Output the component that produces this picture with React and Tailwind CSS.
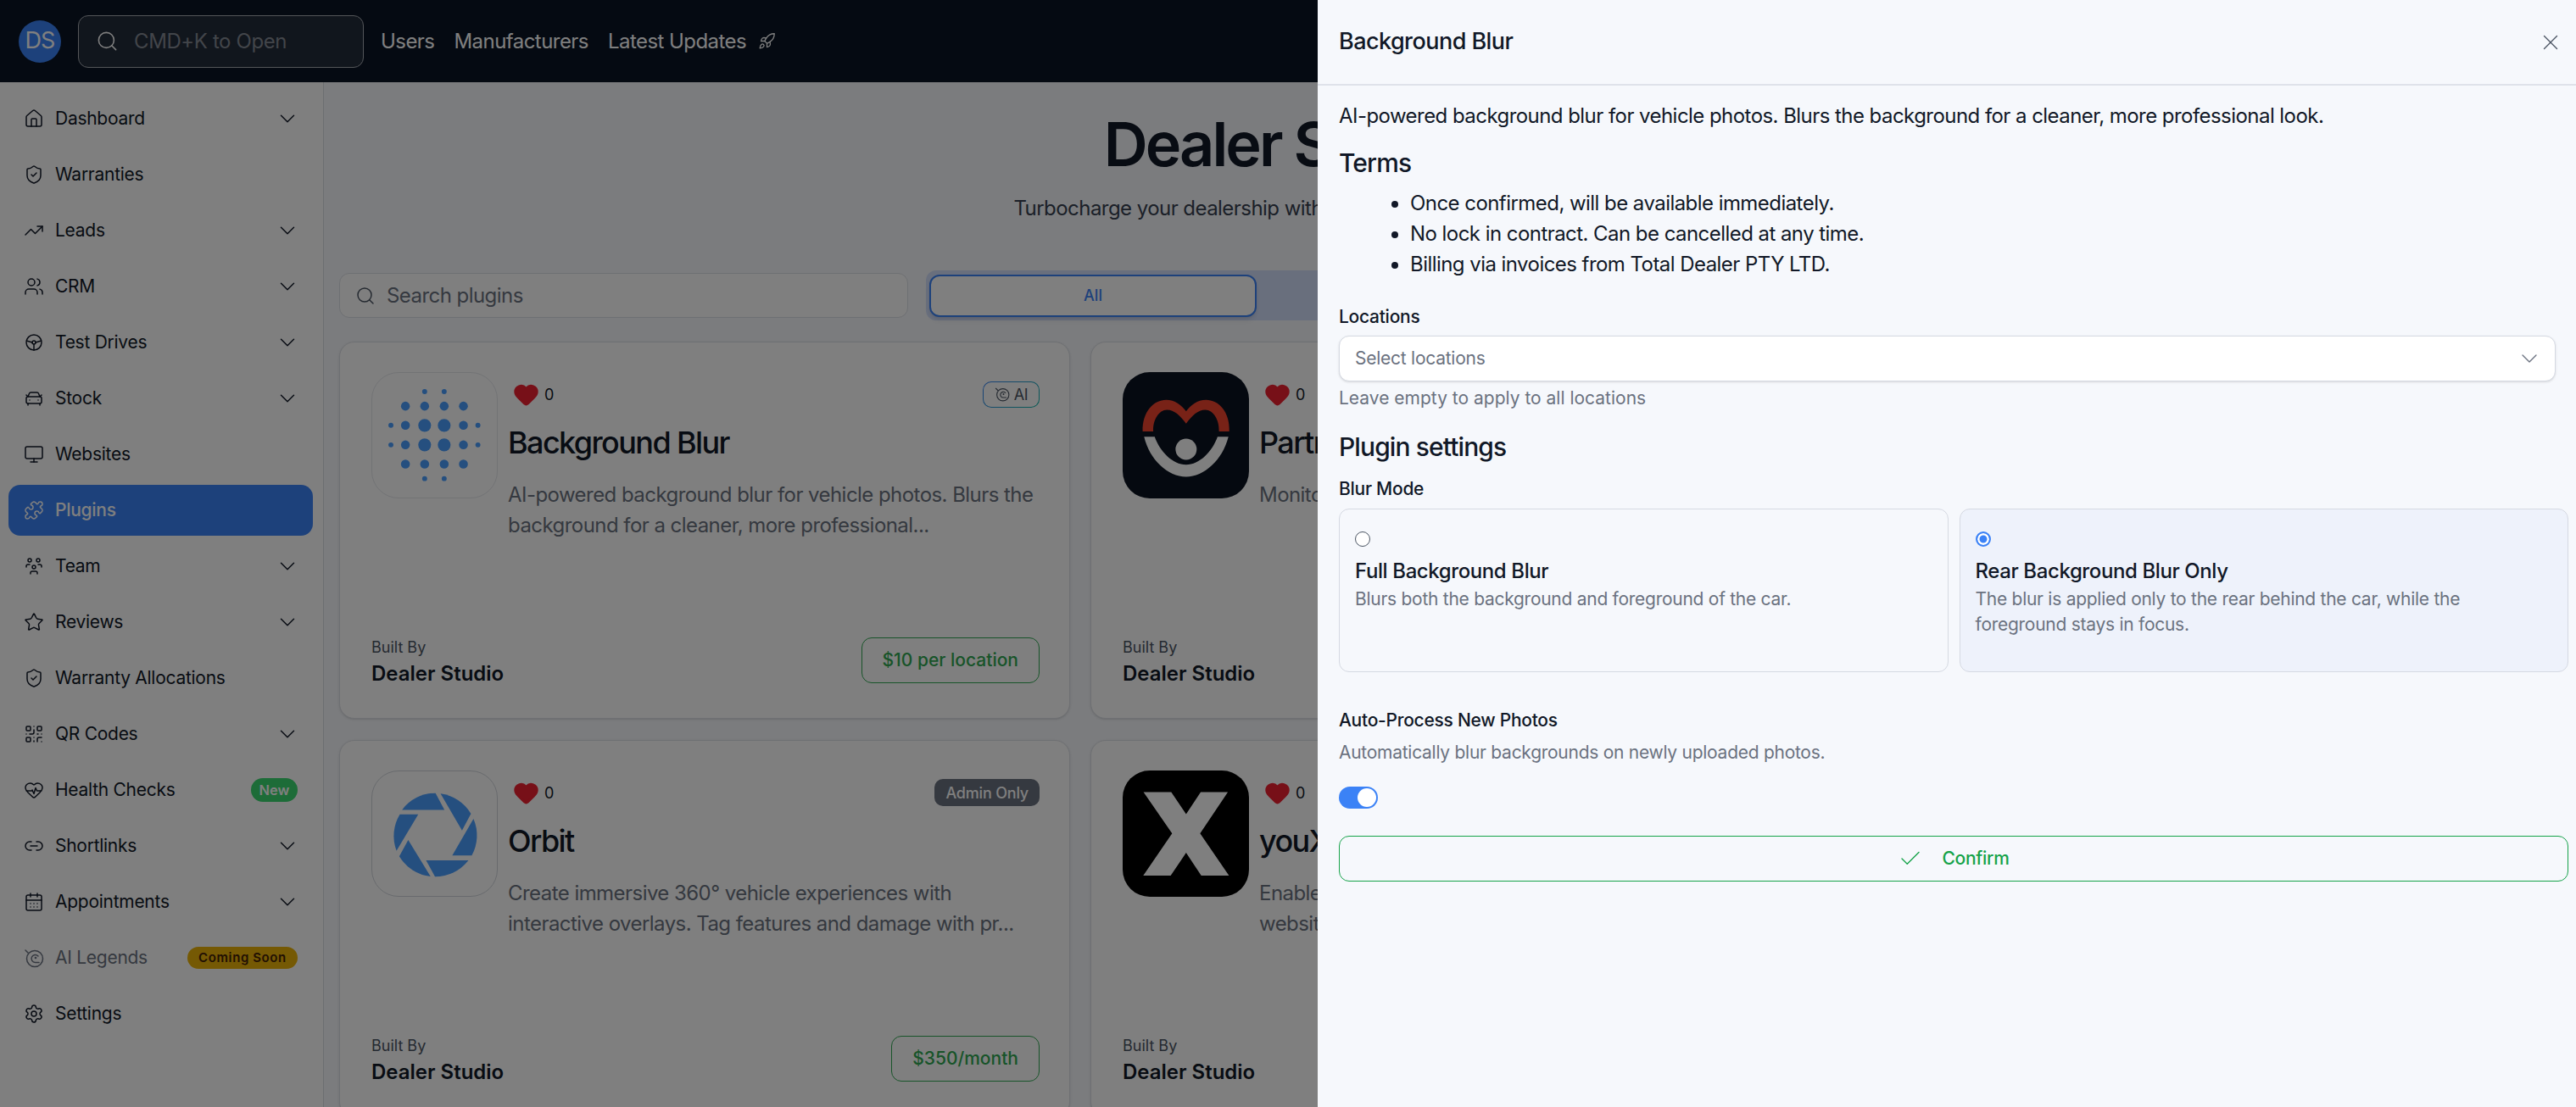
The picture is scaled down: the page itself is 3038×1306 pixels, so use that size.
import React from 'react';
import {
  ChevronDown, Check, X, Search, Rocket, House, ShieldCheck, TrendingUp, CarFront, Monitor, Puzzle, Star,
  QrCode, HeartPulse, Link2, CalendarDays, Settings, Heart,
} from 'lucide-react';
import { TbSteeringWheel, TbUsersGroup } from 'react-icons/tb';
import { LuUsers } from 'react-icons/lu';

const AiIcon = ({ size = 24, className = '' }) => (
  <svg width={size} height={size} viewBox="0 0 24 24" fill="none" stroke="currentColor" strokeWidth="1.5" strokeLinecap="round" strokeLinejoin="round" className={className}>
    <circle cx="13" cy="13" r="9.5" />
    <path d="M2 3l3 3" />
    <path d="M17 10a4.5 4.5 0 1 0-3.5 7.4H18" />
    <circle cx="14" cy="12" r="0.6" fill="currentColor" />
  </svg>
);

const navItems = [
  { label: 'Dashboard', icon: House, caret: true },
  { label: 'Warranties', icon: ShieldCheck },
  { label: 'Leads', icon: TrendingUp, caret: true },
  { label: 'CRM', icon: LuUsers, caret: true },
  { label: 'Test Drives', icon: TbSteeringWheel, caret: true },
  { label: 'Stock', icon: CarFront, caret: true },
  { label: 'Websites', icon: Monitor },
  { label: 'Plugins', icon: Puzzle, active: true },
  { label: 'Team', icon: TbUsersGroup, caret: true },
  { label: 'Reviews', icon: Star, caret: true },
  { label: 'Warranty Allocations', icon: ShieldCheck },
  { label: 'QR Codes', icon: QrCode, caret: true },
  { label: 'Health Checks', icon: HeartPulse, badge: 'new' },
  { label: 'Shortlinks', icon: Link2, caret: true },
  { label: 'Appointments', icon: CalendarDays, caret: true },
  { label: 'AI Legends', icon: AiIcon, badge: 'soon', muted: true },
  { label: 'Settings', icon: Settings },
];

function SidebarItem({ item }) {
  const Icon = item.icon;
  return (
    <div className={`flex h-[60px] items-center rounded-[14px] pr-[18px] pl-[18px] text-[21px] tracking-[-0.27px] ${
      item.active ? 'bg-[#3b82f6] font-medium text-white' : item.muted ? 'text-[#6b7280]' : 'text-[#111827]'
    }`}>
      <Icon size={24} strokeWidth={1.5} className="mr-[13px] shrink-0" />
      <span className="flex-1 whitespace-nowrap">{item.label}</span>
      {item.caret && <ChevronDown size={30} strokeWidth={1.2} className="mr-[-3px]" />}
      {item.badge === 'new' && (
        <span className="flex h-[28px] w-[55px] items-center justify-center rounded-full bg-[#3ad870] text-[16.5px] font-semibold tracking-normal text-white">New</span>
      )}
      {item.badge === 'soon' && (
        <span className="flex h-[26px] w-[130px] items-center justify-center rounded-full bg-[#eab308] text-[15px] font-semibold tracking-[0.6px] text-[#422006]">Coming Soon</span>
      )}
    </div>
  );
}

const BlurLogo = () => {
  const rows = [
    [95, [[211, 9], [281, 9]]],
    [147, [[142, 16], [211, 16], [281, 16], [350, 16]]],
    [216, [[90, 9], [142, 16], [211, 23], [281, 23], [350, 16], [402, 9]]],
    [286, [[90, 9], [142, 16], [211, 23], [281, 23], [350, 16], [402, 9]]],
    [355, [[142, 16], [211, 16], [281, 16], [350, 16]]],
    [407, [[211, 9], [281, 9]]],
  ];
  return (
    <svg viewBox="23 28 447 447" className="size-full">
      {rows.map(([y, dots]) => dots.map(([x, r]) => <circle key={`${x}-${y}`} cx={x} cy={y} r={r} fill="#4a9eff" />))}
    </svg>
  );
};

const PartnerLogo = () => (
  <svg viewBox="45 28 442 442" className="size-full">
    <path d="M115 236C113 165 155 125 197 125C228 125 250 143 267 165C284 143 306 125 337 125C379 125 421 165 418 236H382C384 195 362 160 334 160C308 160 288 180 267 208C246 180 226 160 200 160C172 160 150 195 152 236Z" fill="#f0442f" />
    <path d="M120 254H157C175 305 220 352 267 352C314 352 359 305 377 254H415C395 335 330 394 267 394C204 394 139 335 120 254Z" fill="#fff" />
    <circle cx="267" cy="298" r="37" fill="#fff" />
  </svg>
);

const OrbitLogo = () => (
  <svg viewBox="23 30 447 447" className="size-full" fill="#4a9eff">
    <path d="M130 168A150 150 0 0 1 250 108L282 168Z" />
    <path d="M268 110A150 150 0 0 1 377 182L345 242Z" />
    <path d="M386 200A150 150 0 0 1 380 332L310 332Z" />
    <path d="M368 349A150 150 0 0 1 248 408L216 349Z" />
    <path d="M232 407A150 150 0 0 1 120 335L152 276Z" />
    <path d="M110 315A150 150 0 0 1 122 184L188 184Z" />
  </svg>
);

const XLogo = () => (
  <svg viewBox="45 32 442 442" className="size-full">
    <polygon points="118,108 215,108 267,185 318,108 413,108 316,252 417,400 320,400 267,320 213,400 117,400 218,252" fill="#fff" />
  </svg>
);

const plugins = [
  {
    name: 'Background Blur', logo: BlurLogo, logoBg: 'bg-white border border-[#e5e7eb]', tag: 'ai', price: '$10 per location',
    desc: 'AI-powered background blur for vehicle photos. Blurs the background for a cleaner, more professional...',
  },
  {
    name: 'Partner Health', logo: PartnerLogo, logoBg: 'bg-[#0b1320]', price: '$10 per location',
    desc: 'Monitor partner health across all of your dealership leads.',
  },
  {
    name: 'Orbit', logo: OrbitLogo, logoBg: 'bg-white border border-[#d1d5db]', tag: 'admin', price: '$350/month',
    desc: 'Create immersive 360° vehicle experiences with interactive overlays. Tag features and damage with pr...',
  },
  {
    name: 'youX', logo: XLogo, logoBg: 'bg-black', price: '$10 per location',
    desc: 'Enable finance applications across your dealership website.',
  },
];

function PluginCard({ plugin }) {
  const Logo = plugin.logo;
  return (
    <div className="flex h-[445px] flex-col justify-between rounded-[18px] border border-[#dde0e6] bg-white pt-[35px] pr-[35px] pb-[34px] pl-[37px] shadow-sm">
      <div className="flex gap-[12px]">
        <div className={`size-[149px] shrink-0 overflow-hidden rounded-[32px] ${plugin.logoBg}`}>
          <Logo />
        </div>
        <div className="min-w-0 flex-1">
          <div className="flex h-[52px] items-center justify-between">
            <div className="ml-[6px] flex items-center gap-[6px]">
              <Heart size={31} fill="#ef2030" stroke="#ef2030" />
              <span className="text-[18px] text-[#111827]">0</span>
            </div>
            {plugin.tag === 'ai' && (
              <span className="flex h-[31px] w-[67px] items-center justify-center gap-[5px] rounded-[10px] border border-transparent text-[18px] tracking-[-0.3px] text-[#4b5563] [background:linear-gradient(white,white)_padding-box,linear-gradient(135deg,#3b82f6,#14b8a6)_border-box]">
                <AiIcon size={18} /> AI
              </span>
            )}
            {plugin.tag === 'admin' && (
              <span className="flex h-[32px] items-center rounded-[10px] bg-[#6b7280] px-[13px] text-[18px] font-medium tracking-[-0.2px] text-white">Admin Only</span>
            )}
          </div>
          <h3 className="mt-[7px] text-[36px] leading-[48px] font-medium tracking-[-1.6px] whitespace-nowrap text-[#111827]">{plugin.name}</h3>
          <p className="mt-[20px] text-[24px] leading-[36px] tracking-[-0.55px] text-[#6b7280]">{plugin.desc}</p>
        </div>
      </div>
      <div className="flex items-end justify-between">
        <div>
          <div className="text-[18px] leading-[27px] text-[#4b5563]">Built By</div>
          <div className="text-[24px] leading-[36px] font-semibold text-[#111827]">Dealer Studio</div>
        </div>
        <span className="mb-[7px] flex h-[54px] items-center rounded-[12px] border border-[#30a852] px-[24px] text-[21px] font-medium text-[#30a852]">{plugin.price}</span>
      </div>
    </div>
  );
}

function BlurOption({ title, desc, checked }) {
  return (
    <div className={`h-[193px] rounded-[12px] border border-[#d5d9e2] px-[18px] pt-[26px] ${checked ? 'bg-[#eef2fb]' : ''}`}>
      <span className={`block size-[18px] rounded-full ${checked ? 'border-2 border-[#3b82f6] bg-[#3b82f6] shadow-[inset_0_0_0_2.5px_#fff]' : 'border-[1.5px] border-[#4b5563] bg-white'}`} />
      <div className="mt-[11px] text-[24px] leading-[36px] font-medium tracking-[-0.4px] text-[#111827]">{title}</div>
      <p className="text-[21px] leading-[30px] tracking-[-0.27px] text-[#6b7280]">{desc}</p>
    </div>
  );
}

function PluginDrawer() {
  return (
    <aside className="absolute inset-y-0 right-0 z-20 w-[1484px] bg-[#f6f8fc] text-[#111827]">
      <div className="flex h-[101px] items-center justify-between border-b-2 border-[#dfe2ea] pr-[15px] pl-[25px]">
        <h2 className="text-[27px] font-medium tracking-[-0.55px]">Background Blur</h2>
        <X size={30} strokeWidth={1.1} className="text-[#4b5563]" />
      </div>
      <div className="pt-[18px] pr-[9px] pl-[25px]">
        <p className="text-[24px] leading-[36px] tracking-[-0.55px]">AI-powered background blur for vehicle photos. Blurs the background for a cleaner, more professional look.</p>
        <h3 className="mt-[15px] text-[30px] leading-[45px] font-medium tracking-[-0.9px]">Terms</h3>
        <ul className="mt-[7px] list-disc pl-[84px] text-[24px] leading-[36px] tracking-[-0.55px]">
          <li>Once confirmed, will be available immediately.</li>
          <li>No lock in contract. Can be cancelled at any time.</li>
          <li>Billing via invoices from Total Dealer PTY LTD.</li>
        </ul>
        <div className="mt-[29px] text-[21px] leading-[30px] font-medium tracking-[-0.27px]">Locations</div>
        <div className="mt-[7px] mr-[15px] flex h-[54px] items-center justify-between rounded-[12px] border border-[#d5d9e2] bg-white pr-[14px] pl-[18px] text-[21px] tracking-[-0.25px] text-[#6b7280] shadow-sm">
          Select locations
          <ChevronDown size={32} strokeWidth={1} className="text-[#6b7280]" />
        </div>
        <p className="mt-[5px] text-[21px] leading-[30px] text-[#6b7280]">Leave empty to apply to all locations</p>
        <h3 className="mt-[20px] text-[30px] leading-[45px] font-medium tracking-[-0.9px]">Plugin settings</h3>
        <div className="mt-[12px] text-[21px] leading-[30px] font-medium tracking-[-0.27px]">Blur Mode</div>
        <div className="mt-[8px] grid grid-cols-2 gap-[13px]">
          <BlurOption title="Full Background Blur" desc="Blurs both the background and foreground of the car." />
          <BlurOption checked title="Rear Background Blur Only" desc="The blur is applied only to the rear behind the car, while the foreground stays in focus." />
        </div>
        <div className="mt-[42px] text-[21px] leading-[30px] font-medium tracking-[-0.27px]">Auto-Process New Photos</div>
        <p className="mt-[8px] text-[21px] leading-[30px] tracking-[-0.27px] text-[#6b7280]">Automatically blur backgrounds on newly uploaded photos.</p>
        <div className="mt-[25px] flex h-[26px] w-[46px] items-center justify-end rounded-full bg-[#3b82f6] pr-[2px]">
          <span className="size-[22px] rounded-full bg-white" />
        </div>
        <button className="mt-[32px] flex h-[54px] w-full items-center justify-center gap-[22px] rounded-[12px] border border-[#16a34a] text-[21px] font-medium tracking-[-0.27px] text-[#16a34a]">
          <Check size={30} strokeWidth={1.1} />
          Confirm
        </button>
      </div>
    </aside>
  );
}

export default function App() {
  return (
    <div className="relative flex h-[1306px] w-[3038px] flex-col overflow-hidden bg-[#f6f8fc] font-['Inter',sans-serif]">
      {/* Header */}
      <header className="flex h-[97px] shrink-0 items-center bg-[#0a1424] pl-[22px]">
        <div className="flex size-[50px] items-center justify-center rounded-full bg-[#3b82f6] text-[27px] tracking-[-1px] text-white">DS</div>
        <div className="ml-[20px] flex h-[62px] w-[337px] items-center gap-[18px] rounded-[12px] border border-[#a8acb3] bg-white/10 pl-[20px] text-[24px] tracking-[-0.4px] text-[#858a94]">
          <Search size={27} strokeWidth={1.4} className="text-white" />
          CMD+K to Open
        </div>
        <nav className="ml-[20px] flex items-center gap-[23px] text-[24px] tracking-[-0.55px] text-white">
          <span>Users</span>
          <span>Manufacturers</span>
          <span className="flex items-center gap-[14px]">Latest Updates <Rocket size={21} strokeWidth={1.5} /></span>
        </nav>
      </header>

      <div className="flex min-h-0 flex-1">
        {/* Sidebar */}
        <div className="flex w-[382px] shrink-0 flex-col gap-[6px] border-r border-[#d9dce2] bg-white pt-[13px] pr-[12px] pl-[10px]">
          {navItems.map((item) => <SidebarItem key={item.label} item={item} />)}
        </div>

        {/* Plugins list */}
        <main className="min-w-0 flex-1 overflow-hidden pl-[18px]">
          <div className="pt-[37px] text-center">
            <h1 className="pl-[12px] text-[72px] leading-[72px] font-semibold tracking-[-3px] whitespace-nowrap text-[#111827]">Dealer Studio Marketplace</h1>
            <p className="mt-[22px] pr-[31px] text-[24px] leading-[36px] tracking-[-0.55px] whitespace-nowrap text-[#374151]">Turbocharge your dealership with powerful plugins and integrations for every team here today</p>
          </div>
          <div className="mt-[55px] flex items-center gap-[21px]">
            <div className="flex h-[53px] w-[671px] shrink-0 items-center gap-[13px] rounded-[12px] border border-[#dde0e6] bg-white px-[18px] text-[24px] tracking-[-0.55px] text-[#6b7280]">
              <Search size={24} strokeWidth={1.5} className="text-[#4b5563]" />
              Search plugins
            </div>
            <div className="flex h-[59px] w-[1500px] shrink-0 items-center rounded-[12px] bg-[#d3dffb] pl-[4px]">
              <div className="flex h-[50px] w-[386px] items-center justify-center rounded-[12px] border-2 border-[#3b82f6] bg-white text-[18px] font-medium text-[#3b82f6] shadow-md">All</div>
            </div>
          </div>
          <div className="mt-[25px] grid grid-cols-[862px_862px] gap-x-[24px] gap-y-[25px]">
            {plugins.map((plugin) => <PluginCard key={plugin.name} plugin={plugin} />)}
          </div>
        </main>
      </div>

      {/* Overlay + drawer */}
      <div className="absolute inset-0 z-10 bg-black/50" />
      <PluginDrawer />
    </div>
  );
}
